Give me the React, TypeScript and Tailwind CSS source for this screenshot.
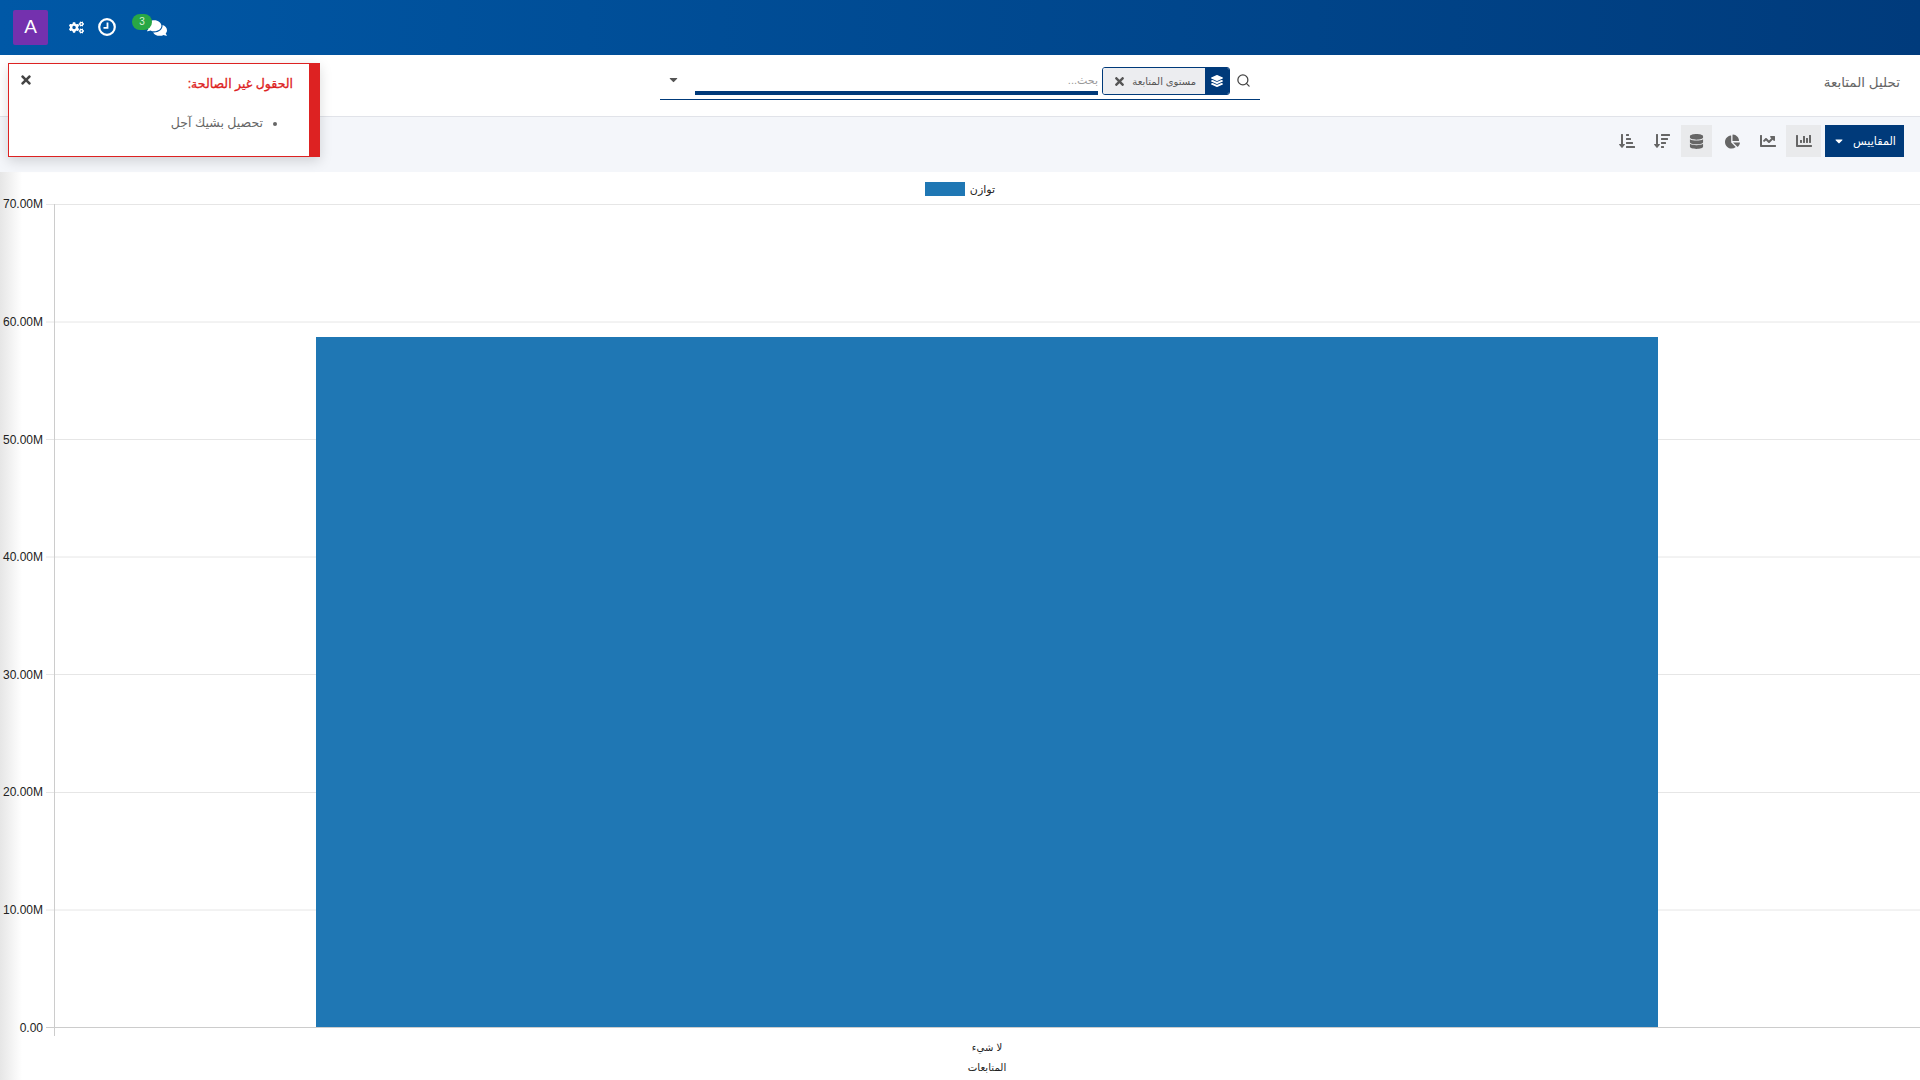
import { Search } from "lucide-react";
import {
  FaCogs,
  FaComments,
  FaLayerGroup,
  FaDatabase,
  FaChartPie,
  FaChartLine,
  FaChartBar,
  FaSortAmountDown,
  FaSortAmountDownAlt,
  FaCaretDown,
  FaTimes,
} from "react-icons/fa";

const font = "font-['Liberation_Sans','DejaVu_Sans',sans-serif]";

const ticks = [
  { label: "70.00M", y: 204.5, dy: 3 },
  { label: "60.00M", y: 322, dy: 4 },
  { label: "50.00M", y: 439.5, dy: 4 },
  { label: "40.00M", y: 557, dy: 4 },
  { label: "30.00M", y: 674.5, dy: 4 },
  { label: "20.00M", y: 792.5, dy: 3 },
  { label: "10.00M", y: 910, dy: 4 },
  { label: "0.00", y: 1027.5, dy: 4 },
];

function Chart() {
  return (
    <svg width="1920" height="908" viewBox="0 172 1920 908" className="relative block">
      {ticks.map((t) => (
        <g key={t.label}>
          <line x1="46" x2="1920" y1={t.y} y2={t.y} stroke={t.y > 1000 ? "#cccccc" : "#e6e6e6"} />
          <text x="43" y={t.y + t.dy} textAnchor="end" fontSize="12" fill="#222" fontFamily="Liberation Sans">
            {t.label}
          </text>
        </g>
      ))}
      <line x1="54.5" x2="54.5" y1="204" y2="1036" stroke="#cccccc" />
      <rect x="316" y="337" width="1342" height="690" fill="#1f77b4" />
      <text x="987" y="1051" textAnchor="middle" fontSize="10" fill="#222" fontFamily="DejaVu Sans">
        لا شيء
      </text>
      <text x="987" y="1071" textAnchor="middle" fontSize="10.2" fill="#222" fontFamily="DejaVu Sans">
        المتابعات
      </text>
    </svg>
  );
}

function ClockIcon() {
  return (
    <svg width="18" height="18" viewBox="0 0 18 18" className="ml-[14px] -mt-[1px]" fill="none" stroke="white">
      <circle cx="9" cy="9" r="7.8" strokeWidth="2.2" />
      <path d="M9.5 4.5V9.8H5.5" strokeWidth="1.8" />
    </svg>
  );
}

export default function App() {
  return (
    <div className={`relative w-[1920px] h-[1080px] overflow-hidden bg-white ${font}`}>
      <header className="h-[55px] bg-gradient-to-r from-[#0058a6] to-[#003b7c] flex items-center pl-[13px]">
        <div className="w-[35px] h-[35px] rounded-[2px] bg-[#7431ae] text-white text-[19px] flex items-center justify-center">A</div>
        <FaCogs className="ml-[21px] -mt-[1px] text-white text-[15px]" />
        <ClockIcon />
        <div className="relative ml-[31px]">
          <FaComments className="text-white text-[20px]" />
          <span className="absolute left-[-15px] top-[-4px] w-[20px] h-[16px] rounded-full bg-[#28a745] text-[#d8f0d8] text-[10px] flex items-center justify-center">3</span>
        </div>
      </header>

      <div dir="rtl" className="h-[62px] border-b border-[#e1e3e9] flex items-start">
        <div className="w-[660px] pr-[20px] pt-[18px] text-[13.5px] text-[#666]">تحليل المتابعة</div>
        <div className="w-[600px] h-[45px] border-b border-[#003a7a] flex items-start pt-[12px]">
          <Search size={15} strokeWidth={2} className="mr-[9px] mt-[6px] text-[#444]" />
          <div className="flex h-[28px] mr-[6px] border border-[#003a7a] rounded-[3px] overflow-hidden">
            <div className="w-[24px] bg-[#003a7a] text-white flex items-center justify-center">
              <FaLayerGroup className="text-[12px]" />
            </div>
            <div className="w-[102px] bg-[#ecedf0] flex items-center justify-between pr-[9px] pl-[10px] text-[10px] text-[#555]">
              <span>مستوى المتابعة</span>
              <FaTimes className="text-[13px] text-[#555]" />
            </div>
          </div>
          <div className="w-[403px] mr-[4px] h-[28px] border-b-[4px] border-[#003a7a] pt-[2px] text-[11px] text-[#999] flex items-center">بحث...</div>
          <FaCaretDown className="mr-[15px] mt-[6px] text-[#555] text-[13px]" />
        </div>
      </div>

      <div dir="rtl" className="h-[55px] bg-[#f4f6fa] flex items-start pt-[8px] pr-[16px]">
        <button className="w-[79px] h-[32px] bg-[#003a7a] text-white text-[11.2px] flex items-center justify-center gap-[8px]">
          <span>المقاييس</span>
          <FaCaretDown className="text-[12px]" />
        </button>
        <div className="mr-[4px] w-[35px] h-[32px] bg-[#e9eaec] text-[#666] flex items-center justify-center"><FaChartBar className="text-[16px]" /></div>
        <div className="w-[36px] h-[32px] text-[#666] flex items-center justify-center"><FaChartLine className="text-[16px]" /></div>
        <div className="w-[36px] h-[32px] text-[#666] flex items-center justify-center"><FaChartPie className="text-[15px]" /></div>
        <div className="mr-[2px] w-[31px] h-[32px] bg-[#e9eaec] text-[#666] flex items-center justify-center"><FaDatabase className="text-[15px]" /></div>
        <div className="w-[38px] h-[32px] text-[#666] flex items-center justify-center"><FaSortAmountDown className="text-[16px]" /></div>
        <div className="w-[32px] h-[32px] text-[#666] flex items-center justify-center"><FaSortAmountDownAlt className="text-[16px]" /></div>
      </div>

      <div className="absolute left-0 top-[172px] bottom-0 w-[22px] bg-gradient-to-r from-[#e6e6e6] to-white" />

      <Chart />

      <div dir="rtl" className="absolute left-[925px] top-[182px] w-[70px] h-[14px] flex items-center gap-[5px] text-[11px] text-[#222]">
        <span>توازن</span>
        <span className="w-[41px] h-[14px] bg-[#1f77b4]" />
      </div>

      <div dir="rtl" className="absolute left-[8px] top-[63px] w-[312px] h-[94px] bg-white border border-[#dd2222] border-r-[11px] shadow-[0_4px_12px_rgba(0,0,0,0.15)] pr-[16px] pt-[11px]">
        <div className="text-[12.5px] text-[#dd2222] [-webkit-text-stroke:0.3px_#dd2222]">الحقول غير الصالحة:</div>
        <ul className="mt-[20px] list-disc pr-[30px] text-[12.5px] text-[#666]">
          <li>تحصيل بشيك آجل</li>
        </ul>
        <FaTimes className="absolute left-[10px] top-[9px] text-[#444] text-[14px]" />
      </div>
    </div>
  );
}
